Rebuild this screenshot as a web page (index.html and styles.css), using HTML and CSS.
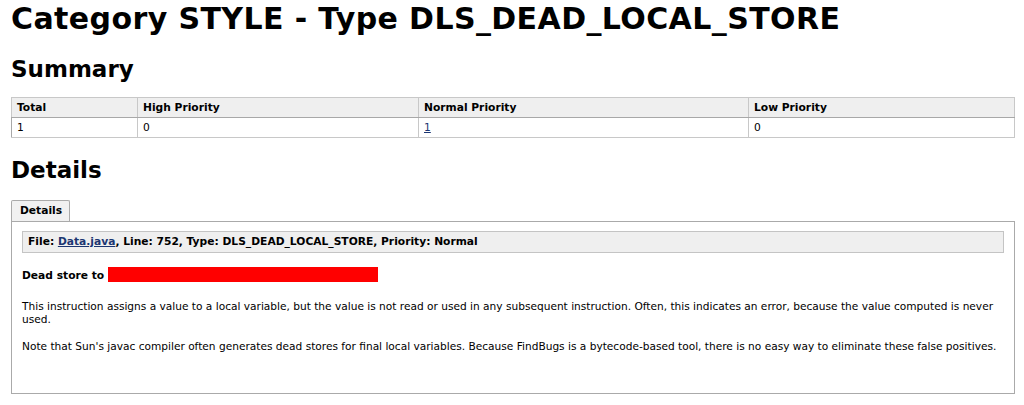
FILE: index.html
```html
<!DOCTYPE html>
<html lang="en">
<head>
    <meta charset="UTF-8">
    <title>Category STYLE - Type DLS_DEAD_LOCAL_STORE</title>
    <link rel="stylesheet" href="styles.css">
</head>
<body>
    <h1>Category STYLE - Type DLS_DEAD_LOCAL_STORE</h1>

    <h2>Summary</h2>
    <table class="summary">
        <tr>
            <th class="col-total">Total</th>
            <th class="col-high">High Priority</th>
            <th class="col-normal">Normal Priority</th>
            <th>Low Priority</th>
        </tr>
        <tr>
            <td>1</td>
            <td>0</td>
            <td><a href="#bug1">1</a></td>
            <td>0</td>
        </tr>
    </table>

    <h2>Details</h2>
    <div class="tabs">
        <div class="tab">Details</div>
    </div>
    <div class="panel">
        <div class="bug-head">
            File: <a href="#">Data.java</a>, Line: 752, Type: DLS_DEAD_LOCAL_STORE, Priority: Normal
        </div>
        <p class="bug-title">Dead store to <span class="redacted"></span></p>
        <p>This instruction assigns a value to a local variable, but the value is not read or used in any subsequent instruction. Often, this indicates an error, because the value computed is never used.</p>
        <p>Note that Sun's javac compiler often generates dead stores for final local variables. Because FindBugs is a bytecode-based tool, there is no easy way to eliminate these false positives.</p>
    </div>
</body>
</html>
```

FILE: styles.css
```css
html, body {
    background: #ffffff;
    margin: 0;
    padding: 0;
}

body {
    padding: 0 9px 0 11px;
    font-family: Verdana, "DejaVu Sans", sans-serif;
    font-size: 11px;
    color: #000;
}

h1 {
    font-size: 30px;
    letter-spacing: 0.4px;
    margin: 2px 0 0 0;
    line-height: 34px;
}

h2 {
    font-size: 23px;
    margin: 0;
    line-height: 28px;
}

h1 + h2 {
    margin-top: 19px;
}

.summary {
    width: 100%;
    border-collapse: collapse;
    border: 1px solid #c8c8c8;
    margin: 14px 0 18px;
}

.summary th,
.summary td {
    text-align: left;
    padding: 3px 5px;
    height: 12px;
    border: 1px solid #c8c8c8;
    font-size: 10.7px;
}

.summary th {
    height: 13px;
    background: #efefef;
    border-bottom: 1px solid #a8a8a8;
}

.summary td {
    border-left: 1px solid #a8a8a8;
}

.col-total { width: 115px; }
.col-high { width: 270px; }
.col-normal { width: 319px; }

a {
    color: #1c3672;
}

.tabs {
    display: flex;
    margin-top: 16px;
}

.tab {
    background: #f1f1f1;
    border: 1px solid #aaaaaa;
    border-bottom: none;
    border-radius: 2px 2px 0 0;
    padding: 4px 7px 4px 8px;
    font-weight: bold;
    font-size: 10.7px;
    line-height: 12px;
}

.panel {
    border: 1px solid #aaaaaa;
    height: 162px;
    padding: 9px 10px 0 10px;
}

.bug-head {
    background: #efefef;
    border: 1px solid #c4c4c4;
    padding: 4px 5px;
    font-weight: bold;
    font-size: 10.7px;
    line-height: 12px;
}

.panel p {
    margin: 15px 0 0;
    font-size: 10.6px;
    line-height: 13px;
}

.panel p + p {
    margin-top: 14px;
}

.panel .bug-title {
    font-weight: bold;
    font-size: 10.7px;
    margin-top: 14px;
    margin-bottom: 18px;
}

.redacted {
    display: inline-block;
    width: 270px;
    height: 15px;
    background: #ff0000;
    vertical-align: -3px;
}
```
